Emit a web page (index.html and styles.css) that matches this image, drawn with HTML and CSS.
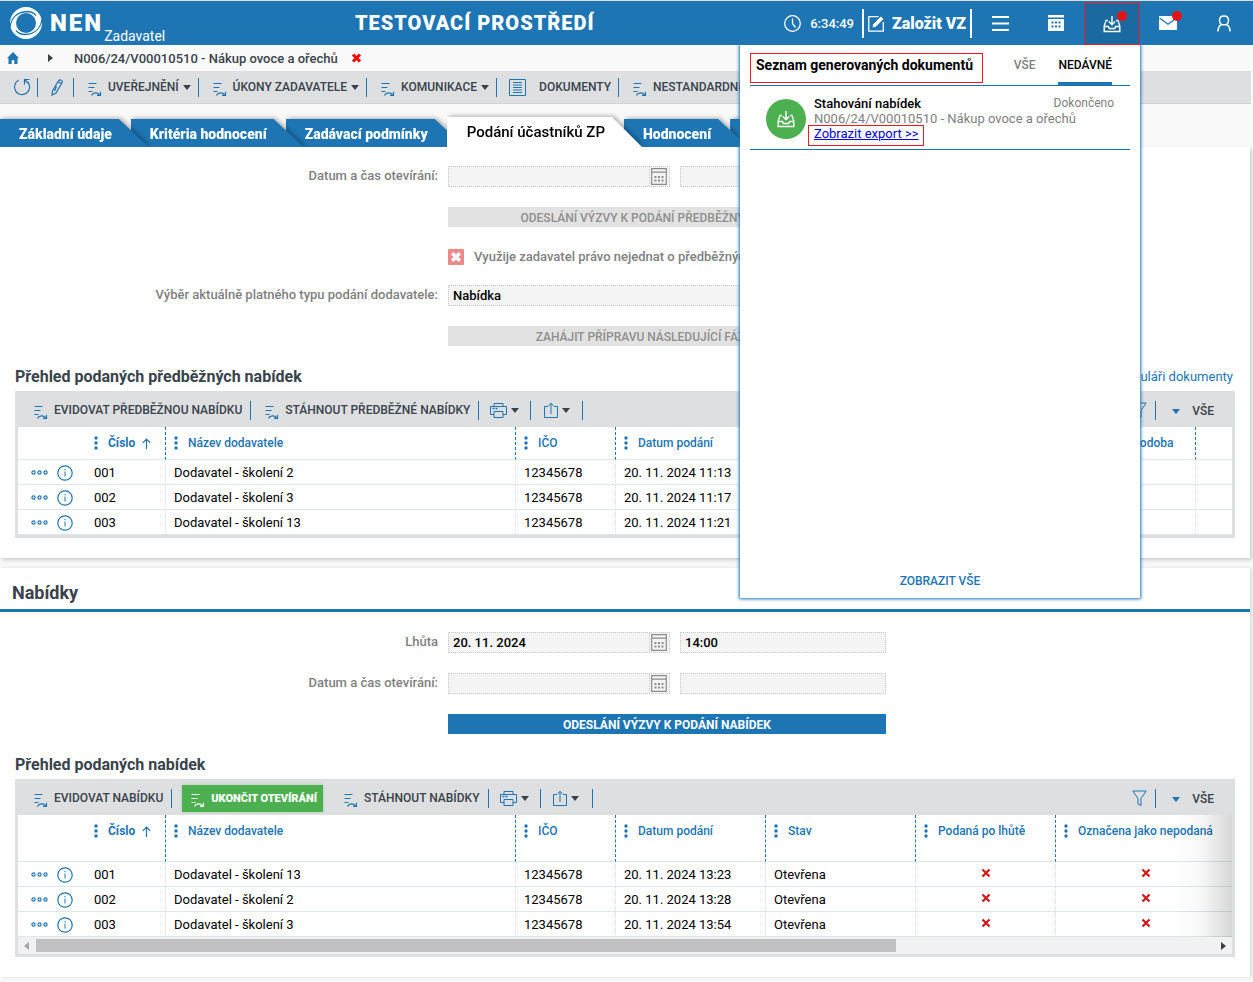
FILE: index.html
```html
<!DOCTYPE html>
<html lang="cs">
<head>
    <meta charset="UTF-8">
    <meta name="viewport" content="width=device-width, initial-scale=1.0">
    <title>NEN - Podání účastníků ZP</title>
    <link rel="stylesheet" href="styles.css">
</head>
<body>
    <!-- Icon set -->
    <svg class="icon-set" aria-hidden="true">
        <symbol id="i-action" viewBox="0 0 14 14">
            <path d="M0.500 1.500h8M0.500 5.500h6M0.500 9.500h4" fill="none" stroke="currentColor" stroke-width="1.200"/>
            <path d="M3.500 13.500c1-3 6-3.500 8-.8M12.500 9.800v3.500H9" fill="none" stroke="currentColor" stroke-width="1.200"/>
        </symbol>
        <symbol id="i-caret" viewBox="0 0 8 5">
            <path d="M0 0h8L4 5z" fill="currentColor"/>
        </symbol>
        <symbol id="i-print" viewBox="0 0 17 17">
            <path d="M4 4.500v-3h9v3M4 12.500H.5v-8h16v8H13M4 9.500h9v6H4z" fill="none" stroke="currentColor"/>
            <path d="M2.500 6.500h2M5.500 6.500h2" stroke="currentColor" stroke-width="1.500"/>
        </symbol>
        <symbol id="i-share" viewBox="0 0 14 17">
            <path d="M4 4.500H.5v11h13v-11H10M7 12V1.500M4.500 4L7 1.200 9.500 4" fill="none" stroke="currentColor"/>
        </symbol>
        <symbol id="i-filter" viewBox="0 0 15 17">
            <path d="M.8 1h13.400L9 8.500v7l-3-1.500V8.500z" fill="none" stroke="currentColor"/>
        </symbol>
        <symbol id="i-dots" viewBox="0 0 17 5">
            <g fill="none" stroke="currentColor" stroke-width="1.200"><circle cx="2.500" cy="2.500" r="1.600"/><circle cx="8.500" cy="2.500" r="1.600"/><circle cx="14.500" cy="2.500" r="1.600"/></g>
        </symbol>
        <symbol id="i-info" viewBox="0 0 16 16">
            <circle cx="8" cy="8" r="7.200" fill="none" stroke="currentColor" stroke-width="1.200"/>
            <path d="M8 6.500v5M8 4v1.300" stroke="currentColor"/>
        </symbol>
        <symbol id="i-menu" viewBox="0 0 4 14">
            <g fill="currentColor"><circle cx="2" cy="2" r="1.700"/><circle cx="2" cy="7" r="1.700"/><circle cx="2" cy="12" r="1.700"/></g>
        </symbol>
        <symbol id="i-up" viewBox="0 0 9 11">
            <path d="M4.500 11V1M.8 4.800L4.500 1l3.700 3.800" fill="none" stroke="currentColor" stroke-width="1.200"/>
        </symbol>
        <symbol id="i-cross" viewBox="0 0 10 10">
            <path d="M1.500 1.500l7 7M8.500 1.500l-7 7" stroke="currentColor" stroke-width="2.200"/>
        </symbol>
        <symbol id="i-calendar" viewBox="0 0 16 17">
            <path d="M.7 .7h14.600v15.600H.7zM.7 4.200h14.600" fill="none" stroke="currentColor" stroke-width="1.200"/>
            <path d="M3.500 9h9M3.500 12.500h9" stroke="currentColor" stroke-width="1.800" stroke-dasharray="2 1.500"/>
        </symbol>
        <symbol id="i-inbox" viewBox="0 0 18 18">
            <path d="M5 5.500H3L1.200 11v5.500h15.600V11L15 5.500h-2M1.200 11.500h4.300l.8 2h5.400l.8-2h4.300M9 1v8.500M5.800 6.500L9 9.700l3.200-3.200" fill="none" stroke="currentColor" stroke-width="1.400"/>
        </symbol>
    </svg>

    <header class="header">
        <a class="logo" href="#">
            <svg class="logo-mark" viewBox="0 0 32 32" aria-hidden="true">
                <circle cx="16" cy="16" r="16" fill="#fff"/>
                <circle cx="16" cy="16" r="10" fill="#1d75b3"/>
                <path d="M0 20C1 12 6 5 17 4.500c4 0 7 1.500 9 4M32 12c-1 8-6 15-17 15.500-4 0-7-1.500-9-4" fill="none" stroke="#1d75b3" stroke-width="1.300"/>
            </svg>
            <span class="logo-name">NEN</span>
            <span class="logo-role">Zadavatel</span>
        </a>
        <div class="env">TESTOVACÍ PROSTŘEDÍ</div>
        <div class="clock">
            <svg width="17" height="17" viewBox="0 0 17 17" aria-hidden="true"><circle cx="8.500" cy="8.500" r="7.800" fill="none" stroke="currentColor" stroke-width="1.300"/><path d="M8.500 3.500v5l3 4" fill="none" stroke="currentColor" stroke-width="1.300"/></svg>
            <span>6:34:49</span>
        </div>
        <button class="create" type="button">
            <svg width="17" height="17" viewBox="0 0 17 17" aria-hidden="true"><path d="M10.500 1.700H.8v14.500h14.500V7" fill="none" stroke="currentColor" stroke-width="1.300"/><path d="M4.500 12.500l.8-3.300L12.800 1.500l2.600 2.500-7.600 7.700z" fill="currentColor"/></svg>
            Založit VZ
        </button>
        <button class="head-btn" type="button" aria-label="Menu">
            <svg width="17" height="15" viewBox="0 0 17 15"><path d="M0 1h17M0 7.500h17M0 14h17" stroke="currentColor" stroke-width="1.800"/></svg>
        </button>
        <button class="head-btn" type="button" aria-label="Kalendář">
            <svg width="16" height="16" viewBox="0 0 16 16"><path d="M0 0h16v2.500H0zM0 4h16v12H0z" fill="currentColor"/><path d="M3.500 7.500h9M3.500 11.500h9" stroke="#1d75b3" stroke-width="1.800" stroke-dasharray="2 1.500"/></svg>
        </button>
        <button class="head-btn head-btn-active" type="button" aria-label="Generované dokumenty">
            <svg width="18" height="18"><use href="#i-inbox"/></svg>
            <span class="badge"></span>
        </button>
        <button class="head-btn" type="button" aria-label="Zprávy">
            <svg width="18" height="14" viewBox="0 0 18 14"><path d="M0 0h18v14H0z" fill="currentColor"/><path d="M.5 2L9 8.200 17.500 2" fill="none" stroke="#1d75b3" stroke-width="1.300"/></svg>
            <span class="badge"></span>
        </button>
        <button class="head-btn" type="button" aria-label="Uživatel">
            <svg width="14" height="17" viewBox="0 0 14 17"><path d="M7 1c2.800 0 4.500 1.800 4.500 4.500S9.500 10 7 10 2.500 8.200 2.500 5.500 4.200 1 7 1zM1 16.500c0-3.500 1.500-6 3.500-7M13 16.500c0-3.500-1.500-6-3.500-7" fill="none" stroke="currentColor" stroke-width="1.500"/></svg>
        </button>

        <section class="popup">
            <div class="popup-head">
                <h2 class="popup-title">Seznam generovaných dokumentů</h2>
                <button class="popup-tab" type="button">VŠE</button>
                <button class="popup-tab popup-tab-active" type="button">NEDÁVNÉ</button>
            </div>
            <div class="popup-item">
                <span class="popup-icon"><svg width="18" height="18" aria-hidden="true"><use href="#i-inbox"/></svg></span>
                <div class="popup-text">
                    <div class="popup-row"><strong>Stahování nabídek</strong><span class="popup-state">Dokončeno</span></div>
                    <div class="popup-sub">N006/24/V00010510 - Nákup ovoce a ořechů</div>
                    <a class="popup-link" href="#">Zobrazit export &gt;&gt;</a>
                </div>
            </div>
            <a class="popup-all" href="#">ZOBRAZIT VŠE</a>
        </section>
    </header>

    <nav class="breadcrumb">
        <a class="home" href="#" aria-label="Domů"><svg width="12" height="12" viewBox="0 0 12 12"><path d="M6 0l6 6.200h-1.500V12H7.300V8H4.700v4H1.500V6.200H0z" fill="currentColor"/></svg></a>
        <svg class="crumb-arrow" width="5" height="8" viewBox="0 0 5 8" aria-hidden="true"><path d="M0 0l5 4-5 4z" fill="currentColor"/></svg>
        <span>N006/24/V00010510 - Nákup ovoce a ořechů</span>
        <button class="crumb-close" type="button" aria-label="Zavřít"><svg width="11" height="10" viewBox="0 0 10 10"><path d="M1.500 1.500l7 7M8.500 1.500l-7 7" stroke="currentColor" stroke-width="3"/></svg></button>
    </nav>

    <div class="toolbar">
        <button class="tool tool-refresh" type="button" aria-label="Obnovit"><svg width="18" height="18" viewBox="0 0 18 18"><path d="M5.500 2.300A7.600 7.600 0 1 0 14.800 4M11.500 6.500V1.500h5M11.500 1.500l3.500 3.500" fill="none" stroke="currentColor" stroke-width="1.200"/></svg></button>
        <button class="tool tool-edit" type="button" aria-label="Upravit"><svg width="12" height="17" viewBox="0 0 12 17"><path d="M1 16l.5-4L7.500 1.800c1.500-2 4.500-.3 3.500 2L5 14zM7 2.800l3.500 2M5.500 7.500L3.500 12" fill="none" stroke="currentColor" stroke-width="1.200"/></svg></button>
        <button class="tool" type="button"><svg class="tool-icon" width="14" height="14"><use href="#i-action"/></svg>UVEŘEJNĚNÍ<svg class="caret" width="8" height="5"><use href="#i-caret"/></svg></button>
        <button class="tool" type="button"><svg class="tool-icon" width="14" height="14"><use href="#i-action"/></svg>ÚKONY ZADAVATELE<svg class="caret" width="8" height="5"><use href="#i-caret"/></svg></button>
        <button class="tool" type="button"><svg class="tool-icon" width="14" height="14"><use href="#i-action"/></svg>KOMUNIKACE<svg class="caret" width="8" height="5"><use href="#i-caret"/></svg></button>
        <button class="tool tool-docs" type="button"><svg width="17" height="17" viewBox="0 0 17 17"><path d="M.5 .5h16v16H.5zM4 3.500h9M4 6h9M4 8.500h9M4 11h9M4 13.500h9" fill="none" stroke="currentColor"/></svg>DOKUMENTY</button>
        <button class="tool" type="button"><svg class="tool-icon" width="14" height="14"><use href="#i-action"/></svg>NESTANDARDNÍ UKONČENÍ</button>
    </div>

    <ul class="tabs">
        <li><a href="#">Základní údaje</a></li>
        <li><a href="#">Kritéria hodnocení</a></li>
        <li><a href="#">Zadávací podmínky</a></li>
        <li class="active"><a href="#">Podání účastníků ZP</a></li>
        <li><a href="#">Hodnocení</a></li>
        <li><a href="#">Výsledek</a></li>
    </ul>

    <main>
        <section class="panel">
            <div class="form">
                <label for="pre-open-date">Datum a čas otevírání:</label>
                <div class="pair">
                    <div class="date"><input id="pre-open-date" type="text" readonly><button type="button" aria-label="Vybrat datum"><svg width="16" height="17"><use href="#i-calendar"/></svg></button></div>
                    <input class="field" type="text" aria-label="Čas otevírání" readonly>
                </div>
                <button class="wide-btn" type="button" disabled>ODESLÁNÍ VÝZVY K PODÁNÍ PŘEDBĚŽNÝCH NABÍDEK</button>
                <div class="check">
                    <input id="no-talks" type="checkbox" disabled>
                    <label for="no-talks">Využije zadavatel právo nejednat o předběžných nabídkách</label>
                </div>
                <label for="bid-type">Výběr aktuálně platného typu podání dodavatele:</label>
                <select class="field" id="bid-type"><option>Nabídka</option></select>
                <button class="wide-btn" type="button" disabled>ZAHÁJIT PŘÍPRAVU NÁSLEDUJÍCÍ FÁZE PODÁNÍ</button>
            </div>

            <div class="grid-title">
                <h3>Přehled podaných předběžných nabídek</h3>
                <a href="#">Nabídky s formuláři dokumenty</a>
            </div>
            <div class="grid">
                <div class="grid-bar">
                    <button class="tool" type="button"><svg class="tool-icon" width="14" height="14"><use href="#i-action"/></svg>EVIDOVAT PŘEDBĚŽNOU NABÍDKU</button>
                    <button class="tool" type="button"><svg class="tool-icon" width="14" height="14"><use href="#i-action"/></svg>STÁHNOUT PŘEDBĚŽNÉ NABÍDKY</button>
                    <button class="tool tool-small" type="button" aria-label="Tisk"><svg width="17" height="17"><use href="#i-print"/></svg><svg class="caret" width="8" height="5"><use href="#i-caret"/></svg></button>
                    <button class="tool tool-small" type="button" aria-label="Export"><svg width="14" height="17"><use href="#i-share"/></svg><svg class="caret" width="8" height="5"><use href="#i-caret"/></svg></button>
                    <button class="tool tool-filter" type="button" aria-label="Filtr"><svg width="15" height="17"><use href="#i-filter"/></svg></button>
                    <button class="tool tool-view" type="button"><svg width="8" height="5"><use href="#i-caret"/></svg>VŠE</button>
                </div>
                <div class="grid-body">
                    <table>
                        <colgroup><col class="c-actions"><col class="c-number"><col class="c-name"><col class="c-id"><col class="c-date"><col class="c-flag"><col class="c-stage"><col class="c-format"><col></colgroup>
                        <thead>
                            <tr>
                                <th></th>
                                <th class="sorted"><svg class="col-menu" width="4" height="14"><use href="#i-menu"/></svg>Číslo<svg class="sort" width="9" height="11"><use href="#i-up"/></svg></th>
                                <th><svg class="col-menu" width="4" height="14"><use href="#i-menu"/></svg>Název dodavatele</th>
                                <th><svg class="col-menu" width="4" height="14"><use href="#i-menu"/></svg>IČO</th>
                                <th><svg class="col-menu" width="4" height="14"><use href="#i-menu"/></svg>Datum podání</th>
                                <th><svg class="col-menu" width="4" height="14"><use href="#i-menu"/></svg>Stav</th>
                                <th><svg class="col-menu" width="4" height="14"><use href="#i-menu"/></svg>Podaná po lhůtě</th>
                                <th><svg class="col-menu" width="4" height="14"><use href="#i-menu"/></svg>Elektronická podoba</th>
                                <th></th>
                            </tr>
                        </thead>
                        <tbody>
                            <tr><td><span class="row-icons"><svg width="17" height="5"><use href="#i-dots"/></svg><svg width="16" height="16"><use href="#i-info"/></svg></span></td><td>001</td><td>Dodavatel - školení 2</td><td>12345678</td><td>20. 11. 2024 11:13</td><td></td><td></td><td></td><td></td></tr>
                            <tr><td><span class="row-icons"><svg width="17" height="5"><use href="#i-dots"/></svg><svg width="16" height="16"><use href="#i-info"/></svg></span></td><td>002</td><td>Dodavatel - školení 3</td><td>12345678</td><td>20. 11. 2024 11:17</td><td></td><td></td><td></td><td></td></tr>
                            <tr><td><span class="row-icons"><svg width="17" height="5"><use href="#i-dots"/></svg><svg width="16" height="16"><use href="#i-info"/></svg></span></td><td>003</td><td>Dodavatel - školení 13</td><td>12345678</td><td>20. 11. 2024 11:21</td><td></td><td></td><td></td><td></td></tr>
                        </tbody>
                    </table>
                </div>
            </div>
        </section>

        <section class="panel">
            <h2 class="panel-title">Nabídky</h2>
            <div class="form">
                <label for="due-date">Lhůta</label>
                <div class="pair">
                    <div class="date"><input id="due-date" type="text" value="20. 11. 2024" readonly><button type="button" aria-label="Vybrat datum"><svg width="16" height="17"><use href="#i-calendar"/></svg></button></div>
                    <input class="field" type="text" value="14:00" aria-label="Lhůta, čas" readonly>
                </div>
                <label for="open-date">Datum a čas otevírání:</label>
                <div class="pair">
                    <div class="date"><input id="open-date" type="text" readonly><button type="button" aria-label="Vybrat datum"><svg width="16" height="17"><use href="#i-calendar"/></svg></button></div>
                    <input class="field" type="text" aria-label="Čas otevírání" readonly>
                </div>
                <button class="wide-btn" type="button">ODESLÁNÍ VÝZVY K PODÁNÍ NABÍDEK</button>
            </div>

            <div class="grid-title">
                <h3>Přehled podaných nabídek</h3>
            </div>
            <div class="grid">
                <div class="grid-bar">
                    <button class="tool" type="button"><svg class="tool-icon" width="14" height="14"><use href="#i-action"/></svg>EVIDOVAT NABÍDKU</button>
                    <button class="tool tool-green" type="button"><svg class="tool-icon" width="14" height="14"><use href="#i-action"/></svg>UKONČIT OTEVÍRÁNÍ</button>
                    <button class="tool" type="button"><svg class="tool-icon" width="14" height="14"><use href="#i-action"/></svg>STÁHNOUT NABÍDKY</button>
                    <button class="tool tool-small" type="button" aria-label="Tisk"><svg width="17" height="17"><use href="#i-print"/></svg><svg class="caret" width="8" height="5"><use href="#i-caret"/></svg></button>
                    <button class="tool tool-small" type="button" aria-label="Export"><svg width="14" height="17"><use href="#i-share"/></svg><svg class="caret" width="8" height="5"><use href="#i-caret"/></svg></button>
                    <button class="tool tool-filter" type="button" aria-label="Filtr"><svg width="15" height="17"><use href="#i-filter"/></svg></button>
                    <button class="tool tool-view" type="button"><svg width="8" height="5"><use href="#i-caret"/></svg>VŠE</button>
                </div>
                <div class="grid-body grid-more">
                    <table class="tall-head">
                        <colgroup><col class="c-actions"><col class="c-number"><col class="c-name"><col class="c-id"><col class="c-date"><col class="c-state"><col class="c-flag"><col class="c-last"></colgroup>
                        <thead>
                            <tr>
                                <th></th>
                                <th class="sorted"><svg class="col-menu" width="4" height="14"><use href="#i-menu"/></svg>Číslo<svg class="sort" width="9" height="11"><use href="#i-up"/></svg></th>
                                <th><svg class="col-menu" width="4" height="14"><use href="#i-menu"/></svg>Název dodavatele</th>
                                <th><svg class="col-menu" width="4" height="14"><use href="#i-menu"/></svg>IČO</th>
                                <th><svg class="col-menu" width="4" height="14"><use href="#i-menu"/></svg>Datum podání</th>
                                <th><svg class="col-menu" width="4" height="14"><use href="#i-menu"/></svg>Stav</th>
                                <th><svg class="col-menu" width="4" height="14"><use href="#i-menu"/></svg>Podaná po lhůtě</th>
                                <th><svg class="col-menu" width="4" height="14"><use href="#i-menu"/></svg>Označena jako nepodaná</th>
                            </tr>
                        </thead>
                        <tbody>
                            <tr><td><span class="row-icons"><svg width="17" height="5"><use href="#i-dots"/></svg><svg width="16" height="16"><use href="#i-info"/></svg></span></td><td>001</td><td>Dodavatel - školení 13</td><td>12345678</td><td>20. 11. 2024 13:23</td><td>Otevřena</td><td class="no"><svg width="10" height="10"><use href="#i-cross"/></svg></td><td class="no"><svg width="10" height="10"><use href="#i-cross"/></svg></td></tr>
                            <tr><td><span class="row-icons"><svg width="17" height="5"><use href="#i-dots"/></svg><svg width="16" height="16"><use href="#i-info"/></svg></span></td><td>002</td><td>Dodavatel - školení 2</td><td>12345678</td><td>20. 11. 2024 13:28</td><td>Otevřena</td><td class="no"><svg width="10" height="10"><use href="#i-cross"/></svg></td><td class="no"><svg width="10" height="10"><use href="#i-cross"/></svg></td></tr>
                            <tr><td><span class="row-icons"><svg width="17" height="5"><use href="#i-dots"/></svg><svg width="16" height="16"><use href="#i-info"/></svg></span></td><td>003</td><td>Dodavatel - školení 3</td><td>12345678</td><td>20. 11. 2024 13:54</td><td>Otevřena</td><td class="no"><svg width="10" height="10"><use href="#i-cross"/></svg></td><td class="no"><svg width="10" height="10"><use href="#i-cross"/></svg></td></tr>
                        </tbody>
                    </table>
                </div>
                <div class="scroll" aria-hidden="true">
                    <svg class="scroll-left" width="5" height="8" viewBox="0 0 5 8"><path d="M5 0v8L0 4z" fill="currentColor"/></svg>
                    <div class="scroll-track"><div class="scroll-thumb"></div></div>
                    <svg width="5" height="8" viewBox="0 0 5 8"><path d="M0 0l5 4-5 4z" fill="currentColor"/></svg>
                </div>
            </div>
        </section>
    </main>
</body>
</html>
```
FILE: styles.css
```css
* {
    box-sizing: border-box;
}

body {
    margin: 0;
    font-family: Roboto, "Liberation Sans", sans-serif;
    font-size: 13px;
    color: #39434b;
    background: #f9f9f9;
}

button, input, select {
    font-family: inherit;
    font-size: inherit;
    color: inherit;
    border: 0;
    border-radius: 0;
    padding: 0;
    background: none;
}

a {
    color: #1d75b3;
    text-decoration: none;
}

svg {
    display: block;
    flex: none;
}

.icon-set {
    position: absolute;
    width: 0;
    height: 0;
}

/* Header */
.header {
    position: relative;
    z-index: 20;
    display: flex;
    align-items: center;
    height: 45px;
    padding-right: 1px;
    border-top: 1px solid #dedfe1;
    background: #1d75b3;
    color: #fff;
}

.logo {
    display: flex;
    align-items: center;
    height: 44px;
    padding-left: 10px;
    color: #fff;
}

.logo-mark {
    width: 32px;
    height: 32px;
}

.logo-name {
    margin-left: 8px;
    font-size: 24px;
    font-weight: 900;
    letter-spacing: 2px;
}

.logo-role {
    align-self: flex-end;
    padding: 0 0 1px 1px;
    font-size: 14px;
}

.env {
    flex: 1;
    text-align: center;
    font-size: 20px;
    font-weight: 900;
    letter-spacing: 1px;
}

.clock {
    display: flex;
    align-items: center;
    gap: 9px;
    margin-right: 8px;
    font-weight: 500;
}

.create {
    display: flex;
    align-items: center;
    gap: 7px;
    height: 29px;
    padding: 0 4px;
    border: solid #fff;
    border-width: 0 2px;
    font-size: 16px;
    font-weight: 900;
}

.head-btn {
    position: relative;
    display: flex;
    align-items: center;
    justify-content: center;
    width: 56px;
    height: 44px;
}

.head-btn-active {
    height: 42px;
    align-self: flex-end;
    border: 1px solid #ed1c24;
    background: #1a69a1;
}

.badge {
    position: absolute;
    top: 10px;
    left: 32px;
    width: 10px;
    height: 10px;
    border-radius: 50%;
    background: #e31414;
}

.head-btn-active .badge {
    top: 7px;
}

/* Generated documents popup */
.popup {
    position: absolute;
    top: 44px;
    right: 113px;
    display: flex;
    flex-direction: column;
    width: 400px;
    height: 553px;
    padding: 8px 10px;
    background: #fff;
    color: #000;
    box-shadow: 0 0 3px 1px #1d75b3;
    clip-path: inset(0 -5px -5px -5px);
}

.popup-head {
    display: flex;
    height: 33px;
    border-bottom: 1px solid #1d75b3;
}

.popup-title {
    width: 233px;
    height: 30px;
    margin: 0 auto 0 0;
    padding-left: 5px;
    border: 1px solid #ed1c24;
    font-size: 14px;
    font-weight: 700;
    line-height: 22px;
    white-space: nowrap;
}

.popup-tab {
    margin-right: 23px;
    padding-bottom: 8px;
    font-size: 12px;
    font-weight: 500;
    color: #7f7f7f;
}

.popup-tab-active {
    margin-right: 18px;
    padding-bottom: 5px;
    border-bottom: 3px solid #1d75b3;
    color: #000;
}

.popup-item {
    display: flex;
    gap: 8px;
    height: 64px;
    padding: 10px 16px 0;
    border-bottom: 1px solid #1d75b3;
    line-height: 15px;
}

.popup-icon {
    display: flex;
    align-items: center;
    justify-content: center;
    width: 40px;
    height: 40px;
    margin-top: 3px;
    border-radius: 50%;
    background: #4caf50;
    color: #fff;
}

.popup-text {
    flex: 1;
}

.popup-row {
    display: flex;
    justify-content: space-between;
}

.popup-row strong {
    font-weight: 500;
}

.popup-state {
    font-size: 12px;
}

.popup-state, .popup-sub {
    color: #7f7f7f;
}

.popup-link {
    display: inline-block;
    height: 21px;
    margin: -1px 0 0 -6px;
    padding: 0 4px 0 5px;
    border: 1px solid #ed1c24;
    color: #00e;
    text-decoration: underline;
}

.popup-all {
    margin: auto auto 2px;
    font-size: 12px;
    font-weight: 500;
}

/* Breadcrumb and main toolbar */
.breadcrumb {
    display: flex;
    align-items: center;
    height: 26px;
    padding-left: 7px;
    font-weight: 500;
}

.home {
    color: #1d75b3;
}

.crumb-arrow {
    margin: 0 21px 0 29px;
}

.crumb-close {
    margin-left: 13px;
    color: #f00;
}

.toolbar {
    display: flex;
    align-items: center;
    height: 33px;
    margin-right: 2px;
    padding-left: 13px;
    border-bottom: 1px solid #d3d3d4;
    background: #dedfe1;
    overflow: hidden;
}

.tool {
    display: flex;
    align-items: center;
    flex: none;
    height: 19px;
    padding: 0 7px 0 14px;
    border-right: 1px solid #1d75b3;
    font-size: 12px;
    font-weight: 500;
    line-height: 17px;
    white-space: nowrap;
}

.tool svg {
    color: #1d75b3;
}

.tool .tool-icon {
    align-self: flex-end;
    margin: 0 6px 1px 0;
}

.tool .caret {
    margin-left: 4px;
    color: #39434b;
}

.tool-refresh {
    padding: 0 6px 0 0;
}

.tool-edit {
    padding: 0 10px 0 13px;
}

.tool-docs {
    gap: 13px;
    padding-left: 12px;
}

/* Tabs */
.tabs {
    display: flex;
    align-items: flex-end;
    height: 43px;
    margin: 0;
    padding: 0;
    list-style: none;
    overflow: hidden;
}

.tabs li {
    position: relative;
    margin-right: -18px;
    filter: drop-shadow(2px -1px 2px rgba(0, 0, 0, 0.3));
}

.tabs li:nth-child(1) { z-index: 6; }
.tabs li:nth-child(2) { z-index: 5; }
.tabs li:nth-child(3) { z-index: 4; }
.tabs li:nth-child(4) { z-index: 7; }
.tabs li:nth-child(5) { z-index: 2; }

.tabs a {
    display: block;
    height: 28px;
    padding: 0 37px 0 19px;
    background: #1d75b3;
    color: #fff;
    font-size: 14px;
    font-weight: 900;
    line-height: 30px;
    white-space: nowrap;
    clip-path: polygon(0 0, calc(100% - 30px) 0, 100% 100%, 0 100%);
}

.tabs .active a {
    height: 30px;
    padding-left: 20px;
    background: #fff;
    color: #000;
    font-size: 15px;
    font-weight: 500;
}

/* Panels */
.panel {
    margin: 0 3px 10px 0;
    padding: 19px 15px 20px;
    background: #fff;
    box-shadow: 2px 2px 4px rgba(0, 0, 0, 0.18);
}

.panel + .panel {
    padding-top: 0;
    margin-bottom: 5px;
    box-shadow: 2px 0 3px rgba(0, 0, 0, 0.12);
}

.panel-title {
    height: 44px;
    margin: 0 -15px 20px;
    padding-left: 12px;
    border-bottom: 3px solid #1d75b3;
    font-size: 18px;
    font-weight: 700;
    line-height: 49px;
}

.form {
    display: grid;
    grid-template-columns: 141fr 146fr 113fr;
    gap: 20px 10px;
}

.form > label {
    grid-column: 1;
    text-align: right;
    font-weight: 500;
    line-height: 19px;
    color: #7f7f7f;
}

.form > .pair, .form > .field, .form > .wide-btn, .form > .check {
    grid-column: 2;
}

.pair {
    display: flex;
    gap: 10px;
}

.date {
    display: flex;
    flex: 11;
    min-width: 0;
    border: 1px dotted #c8c8c8;
    background: #f4f4f4;
}

.date input {
    flex: 1;
    min-width: 0;
    padding-left: 4px;
    font-weight: 500;
    color: #000;
}

.date button {
    padding: 0 2px 0 1px;
    border-left: 1px dotted #c8c8c8;
    color: #8c8c8c;
}

.date svg {
    margin-top: -1px;
}

.field {
    min-width: 0;
    height: 21px;
    padding-left: 4px;
    border: 1px dotted #c8c8c8;
    background: #f4f4f4;
    color: #000;
    font-weight: 500;
    appearance: none;
}

.pair .field {
    flex: 10;
}

.wide-btn {
    height: 20px;
    padding-top: 1px;
    background: #1d75b3;
    color: #fff;
    font-size: 12px;
    font-weight: 700;
    white-space: nowrap;
}

.wide-btn:disabled {
    background: #e2e2e2;
    color: #8f8f8f;
    font-weight: 500;
}

.check {
    display: flex;
    align-items: flex-end;
    gap: 10px;
    height: 18px;
    font-weight: 500;
    line-height: 16px;
    color: #7f7f7f;
    white-space: nowrap;
}

.check input {
    flex: none;
    width: 16px;
    height: 16px;
    margin: 0;
    border-radius: 1px;
    background: #ee8a8a;
    appearance: none;
}

.check input::before {
    content: "";
    display: block;
    width: 10px;
    height: 10px;
    margin: 3px;
    background: #fff;
    clip-path: polygon(25% 0, 50% 25%, 75% 0, 100% 25%, 75% 50%, 100% 75%, 75% 100%, 50% 75%, 25% 100%, 0 75%, 25% 50%, 0 25%);
}

/* Data grids */
.grid-title {
    display: flex;
    justify-content: space-between;
    height: 24px;
    margin-top: 21px;
    padding-right: 2px;
    line-height: 20px;
}

.grid-title h3 {
    margin: 0;
    font-size: 16px;
    font-weight: 700;
}

.grid {
    padding: 0 3px 3px;
    background: #dedfe1;
}

.grid-bar {
    display: flex;
    align-items: center;
    height: 36px;
    padding: 2px 18px 0 2px;
}

.grid-bar .tool {
    padding-right: 8px;
}

.grid-bar .tool-small {
    justify-content: center;
    width: 52px;
    padding: 0;
}

.grid-bar .tool-filter {
    margin-left: auto;
    padding: 0 8px;
}

.grid-bar .tool-view {
    gap: 12px;
    padding: 2px 0 0 16px;
    border: 0;
}

.grid-bar .tool-green {
    height: 27px;
    margin: 0 7px 0 10px;
    padding: 0 6px 0 9px;
    border: 0;
    background: #4caf50;
    color: #fff;
    font-size: 11px;
    font-weight: 900;
    box-shadow: 0 0 3px #9fd0a1;
}

.tool-green .tool-icon {
    margin-bottom: 5px;
    color: #fff;
}

.grid-body {
    position: relative;
    background: #fff;
    overflow: hidden;
}

/* Fade showing that more columns follow */
.grid-more::after {
    content: "";
    position: absolute;
    top: 0;
    right: 0;
    bottom: 0;
    width: 60px;
    background: linear-gradient(to right, rgba(0, 0, 0, 0), rgba(0, 0, 0, 0.03) 50%, rgba(0, 0, 0, 0.16));
}

table {
    width: 100%;
    border-collapse: separate;
    border-spacing: 0;
    table-layout: fixed;
}

.c-actions { width: 68px; }
.c-number { width: 80px; }
.c-name { width: 350px; }
.c-id { width: 100px; }
.c-date { width: 150px; }
.c-state { width: 150px; }
.c-flag { width: 140px; }
.c-stage { width: 136px; }
.c-format { width: 154px; }
.c-last { width: 180px; }

th {
    height: 33px;
    padding: 8px 0 0 8px;
    border-right: 1px dashed #1d75b3;
    border-bottom: 1px solid #dfe7ea;
    color: #1d75b3;
    font-size: 12px;
    font-weight: 500;
    line-height: 16px;
    text-align: left;
    vertical-align: top;
    white-space: nowrap;
}

.tall-head th {
    height: 47px;
}

th svg {
    display: inline-block;
    vertical-align: middle;
}

.col-menu {
    margin: 0 10px 2px 0;
}

.sort {
    margin-left: 7px;
}

.sorted {
    font-weight: 700;
}

td {
    height: 25px;
    padding: 1px 0 0 8px;
    border-right: 1px dotted #dcdfe1;
    border-bottom: 1px solid #dfe7ea;
    color: #000;
    line-height: 16px;
    white-space: nowrap;
}

th:first-child, td:first-child, th:last-child, td:last-child {
    border-right: 0;
}

.row-icons {
    display: flex;
    align-items: center;
    gap: 9px;
    padding-left: 5px;
    color: #1d75b3;
}

.no {
    padding: 0 0 2px;
    color: #d8161c;
}

.no svg {
    margin: 0 auto;
}

.scroll {
    display: flex;
    align-items: center;
    gap: 7px;
    height: 17px;
    padding: 0 6px;
    background: #f1f1f1;
    color: #404040;
}

.scroll-left {
    color: #a3a3a3;
}

.scroll-track {
    flex: 1;
}

.scroll-thumb {
    width: 73%;
    height: 13px;
    background: #c1c1c1;
}
```
